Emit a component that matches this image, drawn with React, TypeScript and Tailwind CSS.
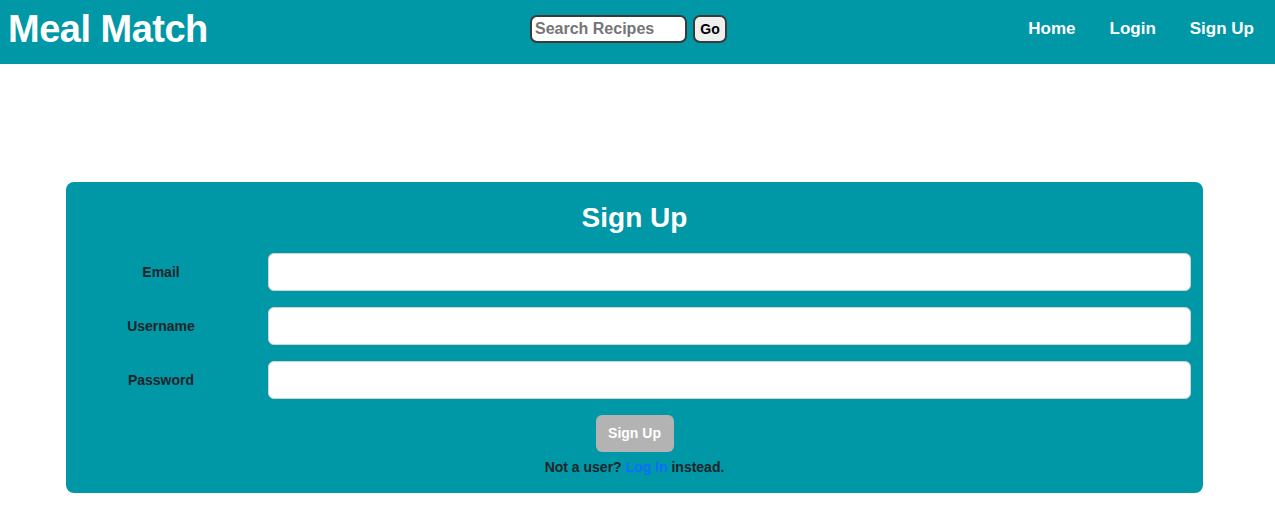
import React from "react"

const font = { fontFamily: '"Liberation Sans", Arial, sans-serif' }

function Header() {
	return (
		<header className="h-16 pb-[6px] bg-[#0097a7] flex items-center text-white">
			<div className="w-[530px] shrink-0 pl-2">
				<h1 className="text-[38px] font-bold leading-none tracking-[-0.5px]">Meal Match</h1>
			</div>
			<form className="flex items-center gap-[6px]" onSubmit={(e) => e.preventDefault()}>
				<input
					type="text"
					placeholder="Search Recipes"
					className="w-[157px] h-[28px] bg-white rounded-[7px] border-2 border-[#3a3a3a] px-[3px] text-[16px] font-bold text-black placeholder:text-[#757575] outline-none"
				/>
				<button className="w-[34px] h-[28px] bg-[#efefef] rounded-[7px] border-2 border-[#3a3a3a] text-[14px] font-bold text-black">
					Go
				</button>
			</form>
			<nav className="ml-auto flex items-center gap-[34px] pr-[21px] text-[17px] font-bold">
				<a href="#">Home</a>
				<a href="#">Login</a>
				<a href="#">Sign Up</a>
			</nav>
		</header>
	)
}

const fields = [
	{ label: "Email", type: "email" },
	{ label: "Username", type: "text" },
	{ label: "Password", type: "password" },
]

export default function App() {
	return (
		<div className="min-h-screen bg-white" style={font}>
			<Header />
			<main className="pt-[118px] pb-8">
				<div className="ml-[66px] w-[1137px] bg-[#0097a7] rounded-[8px] pt-[18px] pb-4 px-3">
					<h2 className="text-center text-white text-[28px] font-bold leading-9 mb-[17px]">Sign Up</h2>
					<div className="flex flex-col gap-4">
						{fields.map((f) => (
							<div key={f.label} className="flex items-center">
								<label className="w-[166px] text-center text-[14px] font-bold text-[#212529]">{f.label}</label>
								<input
									type={f.type}
									className="ml-6 flex-1 h-[38px] bg-white rounded-[6px] border border-[#ced4da] outline-none"
								/>
							</div>
						))}
					</div>
					<div className="flex flex-col items-center mt-4">
						<button className="w-[78px] h-[37px] bg-[#b3b3b3] rounded-[6px] text-white text-[14px] font-bold">
							Sign Up
						</button>
						<p className="mt-[5px] text-[14px] font-bold text-[#212529] leading-5">
							Not a user? <a href="#" className="text-[#0d6efd]">Log In</a> instead.
						</p>
					</div>
				</div>
			</main>
		</div>
	)
}
